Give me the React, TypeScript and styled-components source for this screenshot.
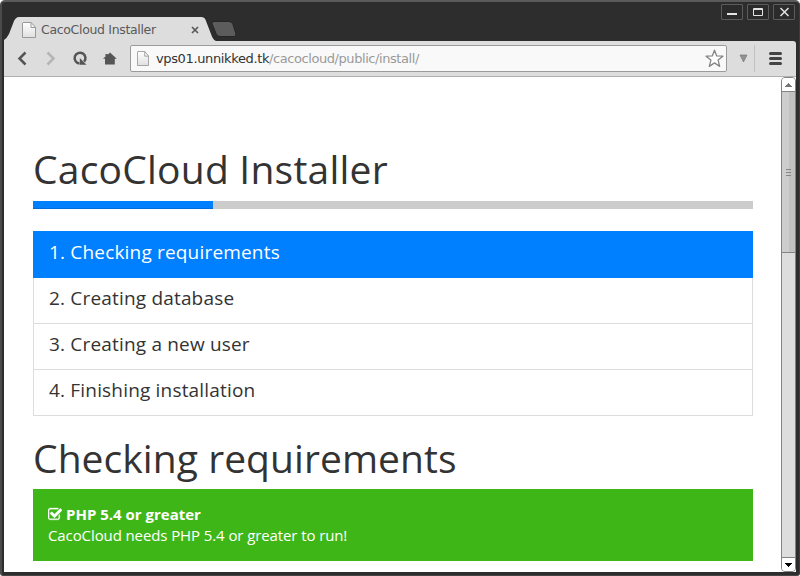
import React from "react";
import styled, { createGlobalStyle } from "styled-components";

const GlobalStyle = createGlobalStyle`
  * { box-sizing: border-box; }
  body { margin: 0; background: #ffffff; overflow: hidden; }
  h1, h2, p { margin: 0; font-weight: 400; }
  svg { display: block; flex: none; }
`;

const Window = styled.div`
  width: 800px;
  height: 576px;
  display: flex;
  flex-direction: column;
  background: #2d2d2d;
  border-style: solid;
  border-width: 2px 1px 1px 2px;
  border-color: #5a5a5a #3c3c3c #454545 #4b4a48;
  border-radius: 5px 5px 3px 3px;
  padding: 0 3px 3px 2px;
  overflow: hidden;
`;

const TitleBar = styled.header`
  height: 39px;
  flex: none;
  display: flex;
  align-items: flex-end;
`;

const Tab = styled.div`
  position: relative;
  width: 210px;
  height: 24px;
  display: flex;
  align-items: center;
  padding: 1px 0 0 18px;
`;

const TabShape = styled.svg`
  position: absolute;
  left: 0;
  top: 0;
`;

const TabLabel = styled.span`
  position: relative;
  width: 150px;
  margin-left: 5px;
  font: 12.5px/16px "DejaVu Sans", sans-serif;
  letter-spacing: -0.33px;
  color: #5a5a5a;
  white-space: nowrap;
`;

const PageIcon = styled.svg`
  position: relative;
`;

const TabClose = styled.svg`
  position: relative;
`;

const NewTab = styled.svg`
  margin: 0 auto 4px -3px;
`;

const WindowButtons = styled.div`
  align-self: flex-start;
  display: flex;
  gap: 4px;
  margin: 2px 1px 0 0;
`;

const WindowButton = styled.button`
  width: 22px;
  height: 16px;
  padding: 0;
  border: 1px solid #5c5c5c;
  border-radius: 1px;
  background: #2b2b2b;
`;

const Toolbar = styled.div`
  height: 36px;
  flex: none;
  display: flex;
  align-items: center;
  background: #dddddd;
  border-bottom: 1px solid #b0b0b0;
  border-top-right-radius: 3px;
`;

const NavButtons = styled.nav`
  width: 126px;
  display: flex;
`;

const AddressBar = styled.div`
  width: 597px;
  height: 27px;
  display: flex;
  align-items: center;
  padding: 0 2px 0 6px;
  border: 1px solid #9b9b9b;
  border-radius: 2px;
  background: #f9f9f9;
`;

const Address = styled.span`
  flex: 1;
  margin-left: 7px;
  font: 13px/18px "DejaVu Sans", sans-serif;
  letter-spacing: -0.43px;
  color: #999999;
  white-space: nowrap;
`;

const Host = styled.span`
  color: #333333;
  letter-spacing: -0.37px;
`;

const Divider = styled.div`
  width: 1px;
  height: 27px;
  background: #c2c2c2;
`;

const Viewport = styled.div`
  height: 495px;
  flex: none;
  display: flex;
  background: #ffffff;
`;

const Page = styled.main`
  width: 777px;
  padding: 70px 28px 0 29px;
  overflow: hidden;
  font-family: "Open Sans", sans-serif;
  color: #333333;
`;

const Heading = styled.h1<{ $tracking: number }>`
  height: 43px;
  font-size: 39px;
  line-height: 43px;
  letter-spacing: ${(p) => p.$tracking}px;
  white-space: nowrap;
`;

const Progress = styled.div`
  height: 8px;
  margin: 11px 0 22px;
  background: #cccccc;
`;

const ProgressBar = styled.div`
  width: 25%;
  height: 8px;
  background: #007fff;
  box-shadow: inset 0 -1px 0 rgba(0, 0, 0, 0.15);
`;

const Steps = styled.div`
  display: flex;
  flex-direction: column;
  margin-bottom: 20px;
`;

const Step = styled.div<{ $active?: boolean }>`
  height: ${(p) => (p.$active ? 47 : 46)}px;
  padding: 10px 15px 0;
  border: 1px solid ${(p) => (p.$active ? "#007fff" : "#dddddd")};
  border-top-width: ${(p) => (p.$active ? 1 : 0)}px;
  background: ${(p) => (p.$active ? "#007fff" : "#ffffff")};
  color: ${(p) => (p.$active ? "#ffffff" : "#333333")};
  font-size: 19px;
  line-height: 21px;
  letter-spacing: 0.18px;
`;

const Alert = styled.section`
  height: 72px;
  margin-top: 10px;
  padding: 15px;
  background: #3fb618;
  color: #ffffff;
  font-size: 15px;
  line-height: 21px;
`;

const AlertTitle = styled.div`
  display: flex;
  align-items: center;
  gap: 4px;
  font-weight: 700;
`;

const AlertText = styled.p`
  letter-spacing: -0.1px;
`;

const Scrollbar = styled.aside`
  width: 15px;
  display: flex;
  flex-direction: column;
  border: 1px solid #838383;
  border-radius: 4px;
  background: #dddddd;
  overflow: hidden;
`;

const ArrowBox = styled.div`
  height: 13px;
  display: flex;
  align-items: center;
  justify-content: center;
  background: #ffffff;
`;

const Thumb = styled.div`
  height: 162px;
  display: flex;
  flex-direction: column;
  align-items: center;
  justify-content: center;
  gap: 2px;
  border: solid #838383;
  border-width: 1px 0;
  background: linear-gradient(90deg, #cdcdcd 0 7px, #c1c1c1 7px);
`;

const Grip = styled.i`
  width: 5px;
  height: 1px;
  background: #858585;
`;

const Track = styled.div`
  flex: 1;
  border-bottom: 1px solid #838383;
`;

const Sheet = ({ width, height }: { width: number; height: number }) => (
  <PageIcon width={width} height={height} viewBox="0 0 14 16" preserveAspectRatio="none">
    <defs>
      <linearGradient id="sheet" x2="0" y2="1">
        <stop stopColor="#ffffff" />
        <stop offset="1" stopColor="#e0e0e0" />
      </linearGradient>
    </defs>
    <path d="M1 .5h8l4.5 4.8v10.2H.5V1Z" fill="url(#sheet)" stroke="#999" />
    <path d="M9 .5v5h4.5" fill="none" stroke="#999" />
  </PageIcon>
);

const CheckIcon = () => (
  <svg width="14" height="15" viewBox="0 0 1664 1792" fill="currentColor" stroke="currentColor" strokeWidth="40">
    <path d="M1408 930v318q0 119-84.5 203.5t-203.5 84.5h-832q-119 0-203.5-84.5t-84.5-203.5v-832q0-119 84.5-203.5t203.5-84.5h832q63 0 117 25 15 7 18 23 3 17-9 29l-49 49q-10 10-23 10-3 0-9-2-23-6-45-6h-832q-66 0-113 47t-47 113v832q0 66 47 113t113 47h832q66 0 113-47t47-113v-254q0-13 9-22l64-64q10-10 23-10 6 0 12 3 20 8 20 29zm231-489l-814 814q-24 24-57 24t-57-24l-430-430q-24-24-24-57t24-57l110-110q24-24 57-24t57 24l263 263 647-647q24-24 57-24t57 24l110 110q24 24 24 57t-24 57z" />
  </svg>
);

const steps = [
  "1. Checking requirements",
  "2. Creating database",
  "3. Creating a new user",
  "4. Finishing installation",
];

export default function App() {
  return (
    <>
      <GlobalStyle />
      <Window>
        <TitleBar>
          <Tab>
            <TabShape width="212" height="24">
              <path d="M0 24v-1q3-2 5-6L10 4q2-4 5-4h182q4 0 5 4l5 13q2 6 5 7Z" fill="#dddddd" />
            </TabShape>
            <Sheet width={14} height={16} />
            <TabLabel>CacoCloud Installer</TabLabel>
            <TabClose width="8" height="8">
              <path d="m1 1 6 6m0-6L1 7" stroke="#595959" strokeWidth="1.7" />
            </TabClose>
          </Tab>
          <NewTab width="26" height="16">
            <path d="M3 .5h15q3 0 4 3l3 9.5q0 2.5-2 2.5H9q-3 0-4-3L1 2.5q0-2 2-2Z" fill="#5c5c5c" stroke="#252525" />
          </NewTab>
          <WindowButtons>
            <WindowButton aria-label="Minimize">
              <svg width="20" height="14"><path d="M5 9h10" stroke="#e4e4e4" strokeWidth="2" /></svg>
            </WindowButton>
            <WindowButton aria-label="Maximize">
              <svg width="20" height="14">
                <path d="M5.5 3.5h9v7h-9ZM5 4.5h10" fill="none" stroke="#e4e4e4" />
              </svg>
            </WindowButton>
            <WindowButton aria-label="Close">
              <svg width="20" height="14"><path d="m6.5 3 8 8m0-8-8 8" stroke="#e4e4e4" strokeWidth="1.5" /></svg>
            </WindowButton>
          </WindowButtons>
        </TitleBar>
        <Toolbar>
          <NavButtons>
            <svg width="126" height="20">
              <path d="m21.5 3.5-6 6 6 6" fill="none" stroke="#555" strokeWidth="2.5" />
              <path d="m43.5 3.5 6 6-6 6" fill="none" stroke="#b5b5b5" strokeWidth="2.5" />
              <path d="M75.5 14.5a5.4 5.4 0 1 1 4.6-1.8" fill="none" stroke="#555" strokeWidth="2.5" />
              <path d="M75.8 9v6.7h6.7Z" fill="#555" />
              <path d="m106 3.5 6.8 6.3h-2V15.5H101V9.8h-2l2.5-2.3V5h2.2v.7Z" fill="#555" />
            </svg>
          </NavButtons>
          <AddressBar>
            <Sheet width={12} height={15} />
            <Address>
              <Host>vps01.unnikked.tk</Host>/cacocloud/public/install/
            </Address>
            <svg width="19" height="19">
              <path
                d="m9.5 1.2 2.2 5.7 6.2.3-4.8 3.9 1.6 6.3-5.2-3.5-5.2 3.5 1.6-6.3L1.1 7.2l6.2-.3Z"
                fill="#fff"
                stroke="#858585"
                strokeWidth="1.3"
                strokeLinejoin="round"
              />
            </svg>
          </AddressBar>
          <svg width="27" height="20">
            <path d="M13 6h7l-3.5 7Z" fill="#919191" stroke="#777" strokeWidth=".7" />
          </svg>
          <Divider />
          <svg width="41" height="20">
            <path d="M15.5 4.5h10m-10 5h10m-10 5h10" stroke="#444" strokeWidth="3" strokeLinecap="round" />
          </svg>
        </Toolbar>
        <Viewport>
          <Page>
            <Heading $tracking={0.22}>CacoCloud Installer</Heading>
            <Progress>
              <ProgressBar />
            </Progress>
            <Steps>
              {steps.map((step, i) => (
                <Step key={step} $active={i === 0}>{step}</Step>
              ))}
            </Steps>
            <Heading as="h2" $tracking={0.06}>Checking requirements</Heading>
            <Alert>
              <AlertTitle>
                <CheckIcon />
                PHP 5.4 or greater
              </AlertTitle>
              <AlertText>CacoCloud needs PHP 5.4 or greater to run!</AlertText>
            </Alert>
          </Page>
          <Scrollbar>
            <ArrowBox>
              <svg width="7" height="4" shapeRendering="crispEdges"><path d="M3 0h1v1h1v1h1v1h1v1H0V3h1V2h1V1h1Z" fill="#777" /></svg>
            </ArrowBox>
            <Thumb><Grip /><Grip /><Grip /></Thumb>
            <Track />
            <ArrowBox>
              <svg width="7" height="4" shapeRendering="crispEdges"><path d="M0 0h7v1H6v1H5v1H4v1H3V3H2V2H1V1H0Z" fill="#000" /></svg>
            </ArrowBox>
          </Scrollbar>
        </Viewport>
      </Window>
    </>
  );
}
